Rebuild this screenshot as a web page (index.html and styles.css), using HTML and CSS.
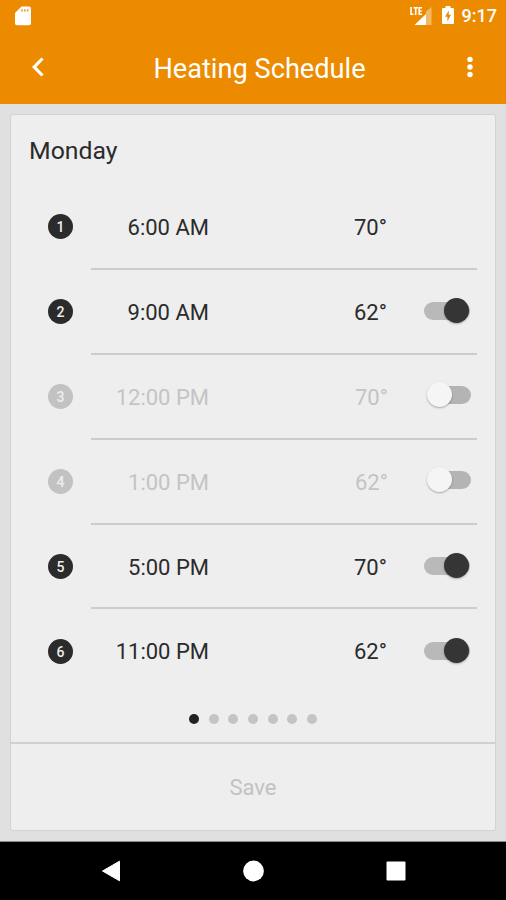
FILE: index.html
```html
<!DOCTYPE html>
<html lang="en">
<head>
    <meta charset="utf-8">
    <title>Heating Schedule</title>
    <link rel="stylesheet" href="styles.css">
</head>

<body>
    <header class="top">
        <div class="status-bar">
            <svg class="sd-icon" width="16" height="20" viewBox="0 0 16 20">
                <path fill="#fff" d="M6.500 .5h7.500q2 0 2 2v14.700q0 2-2 2H2q-2 0-2-2V7z"/>
                <path stroke="#f4a85a" stroke-width="1.600" d="M7 3v2.800M9.800 3v2.800M12.600 3v2.800"/>
            </svg>
            <div class="status-icons">
                <svg class="signal-icon" width="22" height="20" viewBox="0 0 22 20">
                    <path fill="#fff" opacity=".4" d="M16 5.500l5.500-4.500v18H16z"/>
                    <path fill="#fff" d="M4.500 19L16 8v11z"/>
                    <path fill="none" stroke="#fff" stroke-width="1.600" d="M1 1v7.300h2.500M3.500 1.700h4.500M5.700 1.700v7.300M12 1.700H9.200v6.600H12M9.200 5h2.500"/>
                </svg>
                <svg class="battery-icon" width="12" height="18" viewBox="0 0 12 18">
                    <path fill="#fff" d="M3.500 0h5v2H11q1 0 1 1v14q0 1-1 1H1q-1 0-1-1V3q0-1 1-1h2.500z"/>
                    <path fill="#ed8b00" d="M6.800 4.500L3 10.800h2.400v4.700L9 8.800H6.800z"/>
                </svg>
                <span class="clock">9:17</span>
            </div>
        </div>
        <div class="toolbar">
            <svg class="back-icon" width="12" height="20" viewBox="0 0 12 20">
                <path fill="none" stroke="#fff" stroke-width="3.200" d="M10.500 1.500L2.200 10l8.300 8.500"/>
            </svg>
            <h1>Heating Schedule</h1>
            <svg class="more-icon" width="6" height="22" viewBox="0 0 6 22">
                <circle cx="3" cy="3.400" r="2.700" fill="#fff"/>
                <circle cx="3" cy="11" r="2.700" fill="#fff"/>
                <circle cx="3" cy="18.500" r="2.700" fill="#fff"/>
            </svg>
        </div>
    </header>

    <main class="content">
        <section class="card">
            <h2>Monday</h2>
            <ul class="schedule">
                <li class="row">
                    <span class="number">1</span>
                    <div class="entry">
                        <span class="time">6:00 AM</span>
                        <span class="temp">70°</span>
                    </div>
                </li>
                <li class="row">
                    <span class="number">2</span>
                    <div class="entry">
                        <span class="time">9:00 AM</span>
                        <span class="temp">62°</span>
                        <span class="switch on"></span>
                    </div>
                </li>
                <li class="row disabled">
                    <span class="number">3</span>
                    <div class="entry">
                        <span class="time">12:00 PM</span>
                        <span class="temp">70°</span>
                        <span class="switch"></span>
                    </div>
                </li>
                <li class="row disabled">
                    <span class="number">4</span>
                    <div class="entry">
                        <span class="time">1:00 PM</span>
                        <span class="temp">62°</span>
                        <span class="switch"></span>
                    </div>
                </li>
                <li class="row">
                    <span class="number">5</span>
                    <div class="entry">
                        <span class="time">5:00 PM</span>
                        <span class="temp">70°</span>
                        <span class="switch on"></span>
                    </div>
                </li>
                <li class="row">
                    <span class="number">6</span>
                    <div class="entry">
                        <span class="time">11:00 PM</span>
                        <span class="temp">62°</span>
                        <span class="switch on"></span>
                    </div>
                </li>
            </ul>
            <div class="pager">
                <span class="dot active"></span>
                <span class="dot"></span>
                <span class="dot"></span>
                <span class="dot"></span>
                <span class="dot"></span>
                <span class="dot"></span>
                <span class="dot"></span>
            </div>
            <button class="save" disabled>Save</button>
        </section>
    </main>

    <nav class="nav-bar">
        <svg width="20" height="22" viewBox="0 0 20 22">
            <path fill="#fff" stroke="#fff" stroke-linejoin="round" d="M1.500 11L18.500 1.200v19.600z"/>
        </svg>
        <svg width="22" height="22" viewBox="0 0 22 22">
            <circle cx="10.500" cy="11" r="10.400" fill="#fff"/>
        </svg>
        <svg width="20" height="20" viewBox="0 0 20 20">
            <rect x=".5" y=".5" width="19" height="19" rx="1" fill="#fff"/>
        </svg>
    </nav>
</body>
</html>
```

FILE: styles.css
```css
* {
    box-sizing: border-box;
}

body {
    margin: 0;
    height: 900px;
    display: flex;
    flex-direction: column;
    overflow: hidden;
    background: #e0e0e0;
    color: #2b2b2b;
    font-family: Roboto, "Liberation Sans", sans-serif;
}

.top {
    height: 104px;
    flex: none;
    background: #ed8b00;
    color: #fff;
}

.status-bar {
    height: 31px;
    display: flex;
    justify-content: space-between;
    align-items: center;
    padding: 0 9px 0 15px;
}

.status-icons {
    display: flex;
    align-items: center;
}

.signal-icon {
    margin: 0 10px 0 0;
}

.battery-icon {
    margin: 0 8px 1px 0;
}

.clock {
    font-size: 18px;
    font-weight: 500;
    line-height: 30px;
}

.toolbar {
    height: 73px;
    display: flex;
    justify-content: space-between;
    align-items: center;
    padding: 0 33px 1px 32px;
}

h1 {
    margin: 3px 0 0 8px;
    font-size: 27.2px;
    font-weight: 400;
    line-height: 32px;
    white-space: nowrap;
}

.content {
    height: 738px;
    flex: none;
    padding: 11px 11px 12px;
    border-bottom: 1px solid #8c8c8c;
}

.card {
    height: 715px;
    display: flex;
    flex-direction: column;
    background: #eee;
    border-radius: 2px;
    box-shadow: 0 0 1px 1px #d2d2d2;
}

h2 {
    margin: 20px 0 0 18px;
    font-size: 24.8px;
    font-weight: 400;
    line-height: 32px;
}

.schedule {
    list-style: none;
    margin: 18px 0 0;
    padding: 0 18px 0 37px;
}

.row {
    height: 84.9px;
    display: flex;
    align-items: center;
}

.number {
    width: 25px;
    height: 25px;
    margin: 0 18px 1px 0;
    border-radius: 50%;
    background: #2b2b2b;
    color: #eee;
    font-size: 14px;
    font-weight: 500;
    line-height: 26px;
    text-align: center;
}

.entry {
    flex: 1;
    height: 100%;
    display: flex;
    align-items: center;
    border-bottom: 2px solid #ccc;
    font-size: 22px;
    line-height: 26px;
}

.row:last-child .entry {
    border-bottom-color: transparent;
}

.time {
    width: 118px;
    padding-top: 3px;
    text-align: right;
}

.temp {
    width: 70px;
    margin-left: 145px;
    padding-top: 3px;
}

.disabled .temp {
    padding-left: 1px;
}

.disabled {
    color: #c4c4c4;
}

.disabled .number {
    background: #c2c2c2;
}

.switch {
    position: relative;
    width: 46px;
    height: 18px;
    border-radius: 9px;
    background: #b9b9b9;
}

.switch:before {
    position: absolute;
    content: "";
    top: -4px;
    left: -1px;
    width: 25px;
    height: 25px;
    border-radius: 50%;
    background: #f5f5f5;
    box-shadow: 0 1px 2px rgba(0, 0, 0, 0.3);
}

.disabled .switch {
    width: 43px;
    margin: 0 0 2px 4px;
    background: #b4b4b4;
}

.switch.on:before {
    left: 19.5px;
    background: #353535;
}

.pager {
    display: flex;
    justify-content: center;
    gap: 9.7px;
    margin-top: 19.4px;
}

.dot {
    width: 10px;
    height: 10px;
    border-radius: 50%;
    background: #c4c4c4;
}

.dot.active {
    background: #222;
}

.save {
    height: 88px;
    margin-top: auto;
    padding: 0;
    border: 0;
    border-top: 2px solid #d0d0d0;
    background: none;
    color: #c2c2c2;
    font-family: inherit;
    font-size: 22px;
}

.nav-bar {
    flex: 1;
    display: flex;
    justify-content: space-between;
    align-items: center;
    padding: 0 100px 0 101px;
    background: #000;
}
```
